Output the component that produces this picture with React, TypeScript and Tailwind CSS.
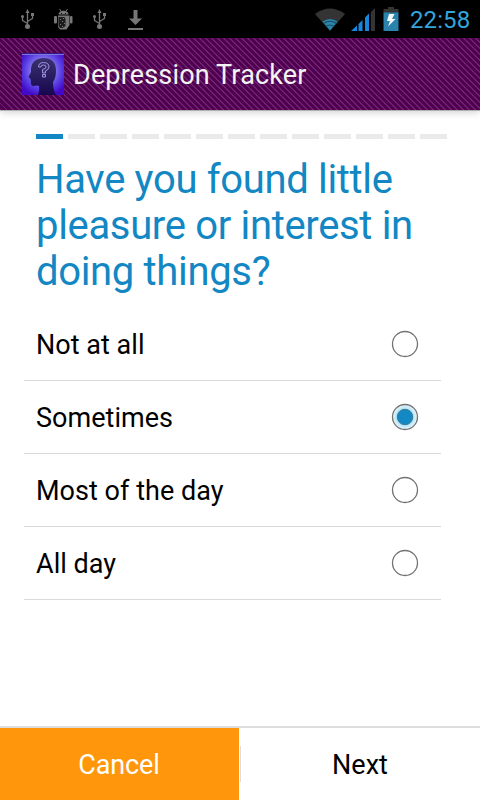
const questions = 13;

const options = ['Not at all', 'Sometimes', 'Most of the day', 'All day'];

const UsbIcon = () => (
  <svg width="16" height="22" viewBox="0 0 16 22" fill="none" stroke="#777" strokeWidth="1.3">
    <path d="M7.5 17V3M7.5 14.500 2.500 11.500V8M7.500 12.500 12.500 9.500V6" />
    <path d="M7.500 0 9.500 4H5.500Z M11 4h3v3h-3Z" fill="#777" stroke="none" />
    <circle cx="2.500" cy="7.500" r="1.500" fill="#777" stroke="none" />
    <circle cx="7.500" cy="17.500" r="2.500" fill="#777" stroke="none" />
  </svg>
);

const AndroidIcon = () => (
  <svg width="20" height="22" viewBox="0 0 20 22" fill="#777">
    <path d="M4.500 5.500C4.500 3 7 1.700 9.500 1.700S14.500 3 14.500 5.500Z" />
    <path d="m5.500 0 1.800 2.500M13.500 0l-1.800 2.500" stroke="#777" />
    <path d="M4 6.500h11.500V16l-3 4.500H6L4 18Z" />
    <rect x="0" y="7" width="3" height="7.500" rx="1" />
    <rect x="16" y="7" width="2.500" height="7.500" rx="1" />
    <path d="M4.500 8h6l1 2v7l-3 2H6l-1.500-2Z" fill="#1c1c1c" />
    <path d="M7 4h1v1H7ZM11 4h1v1h-1Z" fill="#111" />
    <path d="M6 10h1v1H6ZM9 9h1v1H9ZM8 12h1v1H8ZM10 14h1v1h-1ZM6 15h1v1H6ZM8 17h1v1H8Z" />
  </svg>
);

const DownloadIcon = () => (
  <svg width="16" height="20" viewBox="0 0 16 20" fill="#777">
    <path d="M5.500 0h4v8.500h4.500L7.500 15 1 8.500h4.500ZM0 18h15v2H0Z" />
  </svg>
);

const WifiIcon = () => (
  <svg width="30" height="23" viewBox="0 0 30 23">
    <path d="M0 6Q15-5 30 6L15 23Z" fill="#343434" />
    <path d="M7.500 13.500Q15 8.500 22.500 13.500L15 22.500Z" fill="#2a85ad" />
    <path d="M8.500 15.500Q15 11 21.500 15.500M11 18.500q4-3 8 0" fill="none" stroke="#174a60" strokeWidth="1.200" />
  </svg>
);

const SignalIcon = () => (
  <svg width="25" height="23" viewBox="0 0 25 23" fill="#1687dd">
    <path d="M0 23 6 17.500V23ZM7.500 16 11.500 12V23h-4ZM14 9.500 18 5.500V23h-4Z" />
    <path d="M20 4 24 0V23h-4Z" fill="#343434" />
  </svg>
);

const BatteryIcon = () => (
  <svg width="16" height="24" viewBox="0 0 16 24">
    <path d="M5 0h6v2h4.500v4H.500V2H5Z" fill="#343434" />
    <path d="M.500 5.500h15V24H.500Z" fill="#2b83ad" />
    <path d="M6 7h5.500L9 12h3.500L5 19.500 7 14H4Z" fill="#f2f8fa" />
  </svg>
);

const AppIcon = () => (
  <svg width="42" height="42" viewBox="0 0 42 42">
    <defs>
      <radialGradient id="glow" cx="50%" cy="42%" r="62%">
        <stop offset="0.450" stopColor="#8272e8" />
        <stop offset="0.700" stopColor="#5a40e4" />
        <stop offset="1" stopColor="#4309c9" />
      </radialGradient>
      <linearGradient id="head" x1="0" y1="0" x2="0" y2="1">
        <stop offset="0" stopColor="#3a316e" />
        <stop offset="1" stopColor="#18074f" />
      </linearGradient>
    </defs>
    <rect width="42" height="42" fill="url(#glow)" />
    <rect width="42" height="1" fill="#33158c" />
    <rect y="1" width="42" height="1" fill="#7d76dc" />
    <path
      d="M16 42Q18 37 17 33Q15 32 12 33Q9 33 9 30L8.500 26 6.500 24 9 19Q8 6 21 5Q34 5 34 18Q34 25 31 29Q31 37 34 42Z"
      fill="url(#head)"
    />
    <path
      d="M16.500 14Q16.500 9.500 21.500 9.500Q27 9.500 27 14Q27 16.500 23.500 18V20H20.500V16.500Q24 15.500 24 14Q24 12 21.500 12Q19 12 19 14ZM20.500 21.500H23.500V24H20.500Z"
      fill="#3a3170"
      stroke="#9f92dc"
    />
  </svg>
);

const Radio = ({ checked }: { checked: boolean }) => (
  <svg width="28" height="28" viewBox="0 0 28 28">
    <defs>
      <radialGradient id="halo">
        <stop offset="0.600" stopColor="#a6e0f6" />
        <stop offset="1" stopColor="#eff8fb" />
      </radialGradient>
    </defs>
    <circle cx="14" cy="14" r="12.500" fill={checked ? 'url(#halo)' : '#fff'} stroke="#737373" strokeWidth="1.300" />
    {checked && <circle cx="14" cy="14" r="7.700" fill="#1289c5" stroke="#3c7a96" />}
  </svg>
);

const App = () => {
  const selected = 'Sometimes';

  return (
    <div className="flex h-[800px] w-[480px] flex-col overflow-hidden bg-white font-[Roboto,sans-serif] text-black">
      <div className="flex h-[38px] shrink-0 items-center bg-black pl-5 pr-[10px]">
        <div className="flex items-center pt-0.5">
          <UsbIcon />
          <div className="ml-[18px]"><AndroidIcon /></div>
          <div className="ml-[18px]"><UsbIcon /></div>
          <div className="ml-5"><DownloadIcon /></div>
        </div>
        <div className="ml-auto flex items-center">
          <WifiIcon />
          <div className="ml-[6px]"><SignalIcon /></div>
          <div className="ml-[7px]"><BatteryIcon /></div>
          <span className="ml-[11px] w-[60px] whitespace-nowrap pt-0.5 text-[24px] leading-[38px] tracking-[0.1px] text-[#33a5dc]">22:58</span>
        </div>
      </div>

      <header className="z-10 flex h-[72px] shrink-0 items-center bg-[#500050] bg-[repeating-linear-gradient(45deg,#6e226e_0px,#6e226e_1.414px,#500050_1.414px,#500050_4.243px)] pl-[22px] shadow-[0_1px_0_#b0b0b0,0_2px_8px_#0003]">
        <AppIcon />
        <h1 className="ml-[9px] pt-0.5 text-[27px] tracking-[0.16px] text-[#f3f3f3]">Depression Tracker</h1>
      </header>

      <main className="flex flex-1 flex-col">
        <div className="mt-6 flex gap-[5px] pl-9">
          {Array.from({ length: questions }, (_, i) => (
            <div key={i} className={`h-[5px] w-[27px] ${i === 0 ? 'bg-[#1287c3]' : 'bg-[#eaeaea]'}`} />
          ))}
        </div>

        <h2 className="mt-[18px] pl-9 text-[40px] leading-[46px] tracking-[-0.33px] text-[#1287c3]">
          Have you found little
          <br />
          pleasure or interest in
          <br />
          doing things?
        </h2>

        <div className="ml-6 mt-[13px] w-[417px]">
          {options.map((option) => (
            <div key={option} className="flex h-[73px] items-center justify-between border-b border-[#dadada] pl-3 pr-[22px]">
              <span className="pt-0.5 text-[27px] tracking-[0.03px]">{option}</span>
              <Radio checked={option === selected} />
            </div>
          ))}
        </div>
      </main>

      <footer className="flex h-[74px] shrink-0 items-stretch border-t-2 border-[#dddddd] text-[27px]">
        <button className="w-[239px] bg-[#ff960c] pr-px pt-0.5 tracking-[-0.1px] text-white">Cancel</button>
        <div className="ml-px h-9 w-px self-center bg-[#dddddd]" />
        <button className="flex-1 pr-px pt-0.5">Next</button>
      </footer>
    </div>
  );
};

export default App;
